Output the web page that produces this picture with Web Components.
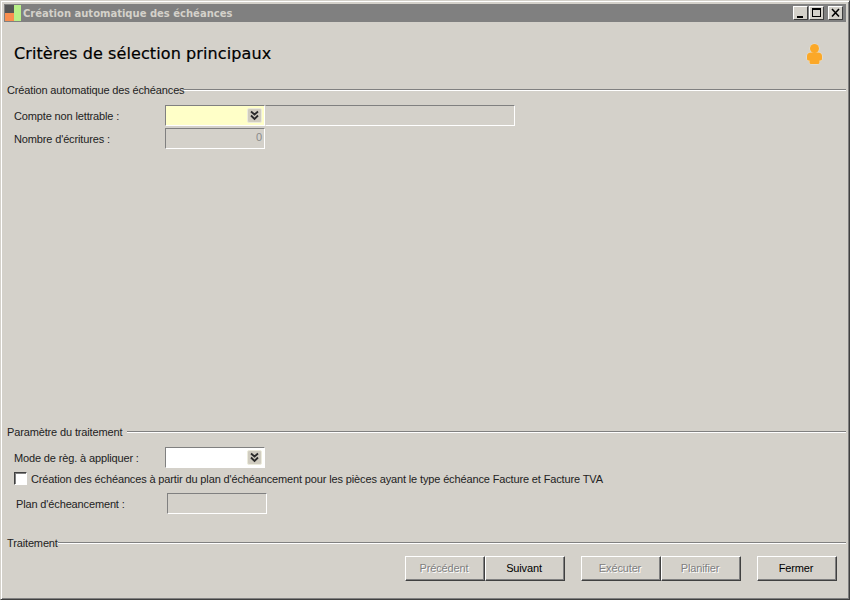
<!DOCTYPE html>
<html lang="fr">
<head>
<meta charset="utf-8">
<title>Création automatique des échéances</title>
<style>
    html, body { margin:0; height:100%; background:#d4d1ca; }
    body { font:11px "Liberation Sans", Arial, sans-serif; letter-spacing:-0.14px; color:#222; }
</style>
</head>
<body>

<app-window>
    <title-bar slot="title">Création automatique des échéances</title-bar>

    <page-header>Critères de sélection principaux</page-header>

    <form-section class="grow" heading="Création automatique des échéances">
        <form-row label="Compte non lettrable :">
            <combo-field required></combo-field>
            <text-field width="250" joined></text-field>
        </form-row>
        <form-row label="Nombre d'écritures :" style="margin-top:2px">
            <text-field width="100" value="0"></text-field>
        </form-row>
    </form-section>

    <form-section heading="Paramètre du traitement" gap="5">
        <form-row label="Mode de règ. à appliquer :">
            <combo-field></combo-field>
        </form-row>
        <check-row>Création des échéances à partir du plan d'échéancement pour les pièces ayant le type échéance Facture et Facture TVA</check-row>
        <form-row label="Plan d'écheancement :" style="margin:8px 0 22px 2px">
            <text-field width="100"></text-field>
        </form-row>
    </form-section>

    <form-section heading="Traitement" compact>
        <button-bar>
            <div class="group">
                <push-button disabled>Précédent</push-button>
                <push-button>Suivant</push-button>
            </div>
            <div class="group">
                <push-button disabled>Exécuter</push-button>
                <push-button disabled>Planifier</push-button>
            </div>
            <div class="group">
                <push-button>Fermer</push-button>
            </div>
        </button-bar>
    </form-section>
</app-window>

<script>
// petit helper, chaque composant a son propre shadow root
function shadow(el, html) {
    el.attachShadow({ mode: "open" }).innerHTML = html;
}

class AppWindow extends HTMLElement {
    constructor() {
        super();
        shadow(this, `
        <style>
            :host {
                display:flex;
                flex-direction:column;
                box-sizing:border-box;
                width:850px;
                height:600px;
                background:#d4d1ca;
                border:1px solid;
                border-color:#d4d1ca #404040 #404040 #d4d1ca;
                box-shadow:inset 1px 1px 0 #fff, inset -1px -1px 0 #808080;
                padding:3px;
            }
            .body {
                flex:1;
                display:flex;
                flex-direction:column;
                min-height:0;
                padding-bottom:15px;
            }
            ::slotted(.grow) { flex:1; }
        </style>
        <slot name="title"></slot>
        <div class="body"><slot></slot></div>
        `);
    }
}
customElements.define("app-window", AppWindow);

class TitleBar extends HTMLElement {
    constructor() {
        super();
        shadow(this, `
        <style>
            :host {
                display:flex;
                align-items:center;
                height:18px;
                background:#808080;
                color:#d4d1ca;
                letter-spacing:0;
                font:bold 10px "DejaVu Sans", Verdana, sans-serif;
            }
            .logo { width:18px; height:18px; flex:none; display:block; margin-right:1px; }
            .text { flex:1; white-space:nowrap; }
            .btns { display:flex; margin-right:3px; }
            .btn {
                box-sizing:border-box;
                width:15px; height:14px;
                background:#d4d1ca;
                border:1px solid;
                border-color:#fff #404040 #404040 #fff;
                display:block;
            }
            .btn.max { margin:0 4px 0 1px; }
        </style>
        <svg class="logo" viewBox="0 0 18 18">
            <rect x="1" y="1" width="9" height="8" fill="#555"/>
            <rect x="1" y="9" width="9" height="8" fill="#f98e4f"/>
            <rect x="10" y="1" width="7" height="16" fill="#b8f088"/>
        </svg>
        <span class="text"><slot></slot></span>
        <div class="btns">
            <svg class="btn" viewBox="0 0 13 12"><rect x="3" y="9" width="6" height="2" fill="#000"/></svg>
            <svg class="btn max" viewBox="0 0 13 12"><rect x="2.500" y="1.500" width="8" height="8" fill="none" stroke="#000"/><rect x="2" y="1" width="9" height="2" fill="#000"/></svg>
            <svg class="btn" viewBox="0 0 13 12"><path d="M3 2l7 7.500M10 2l-7 7.500" stroke="#000" stroke-width="1.600" fill="none"/></svg>
        </div>
        `);
    }
}
customElements.define("title-bar", TitleBar);

class PageHeader extends HTMLElement {
    constructor() {
        super();
        shadow(this, `
        <style>
            :host {
                display:flex;
                align-items:center;
                justify-content:space-between;
                box-sizing:border-box;
                height:61px;
                padding:2px 23px 0 10px;
                color:#000;
                letter-spacing:.1px;
                font:16px "DejaVu Sans", Verdana, sans-serif;
                -webkit-text-stroke:.2px #000;
            }
            svg { width:17px; height:22px; display:block; }
        </style>
        <span><slot></slot></span>
        <svg viewBox="0 0 17 22">
            <g fill="#f2e6cc" stroke="#f2e6cc" stroke-width="1">
                <circle cx="8.500" cy="5.500" r="4.500"/>
                <path d="M5 9.500h7c2.500 0 4 1.500 4 3.500v3c0 1-1 1.500-2.500 1.500v2c0 1-1 1.500-2 1.500h-6c-1 0-2-.5-2-1.500v-2c-1.500 0-2.500-.5-2.500-1.500v-3c0-2 1.500-3.500 4-3.500z"/>
            </g>
            <g fill="#fba828">
                <circle cx="8.500" cy="5.500" r="4.500"/>
                <path d="M5 9.500h7c2.500 0 4 1.500 4 3.500v3c0 1-1 1.500-2.500 1.500v2c0 1-1 1.500-2 1.500h-6c-1 0-2-.5-2-1.500v-2c-1.500 0-2.500-.5-2.500-1.500v-3c0-2 1.500-3.500 4-3.500z"/>
            </g>
        </svg>
        `);
    }
}
customElements.define("page-header", PageHeader);

class FormSection extends HTMLElement {
    constructor() {
        super();
        const heading = this.getAttribute("heading");
        const gapAfter = this.getAttribute("gap") || 0;
        shadow(this, `
        <style>
            :host { display:block; }
            .head {
                display:flex;
                align-items:center;
                height:14px;
                padding-left:3px;
            }
            .head span { white-space:nowrap; margin-right:${gapAfter}px; }
            .head i {
                flex:1;
                height:0;
                margin-top:-1px;
                border-top:1px solid #808080;
                border-bottom:1px solid #fff;
            }
            .content { padding:8px 0 0 10px; }
            :host([compact]) .content { padding-top:6px; }
        </style>
        <div class="head"><span>${heading}</span><i></i></div>
        <div class="content"><slot></slot></div>
        `);
    }
}
customElements.define("form-section", FormSection);

class FormRow extends HTMLElement {
    constructor() {
        super();
        shadow(this, `
        <style>
            :host { display:flex; align-items:center; height:21px; }
            label { width:151px; flex:none; white-space:nowrap; }
            .fields { display:flex; }
        </style>
        <label>${this.getAttribute("label")}</label>
        <div class="fields"><slot></slot></div>
        `);
    }
}
customElements.define("form-row", FormRow);

class TextField extends HTMLElement {
    constructor() {
        super();
        const w = this.getAttribute("width") || 100;
        const value = this.getAttribute("value") || "";
        shadow(this, `
        <style>
            :host {
                display:block;
                box-sizing:border-box;
                width:${w}px;
                height:21px;
                line-height:17px;
                text-align:right;
                padding-right:2px;
                color:#8a8a8a;
                background:#d4d1ca;
                border:1px solid;
                border-color:#808080 #fff #fff #808080;
            }
            :host([joined]) { border-left-color:#d4d1ca; }
        </style>
        ${value}
        `);
    }
}
customElements.define("text-field", TextField);

class ComboField extends HTMLElement {
    constructor() {
        super();
        const bg = this.hasAttribute("required") ? "#ffffc8" : "#fff";
        shadow(this, `
        <style>
            :host {
                display:flex;
                align-items:center;
                justify-content:flex-end;
                box-sizing:border-box;
                width:100px;
                height:21px;
                padding-right:2px;
                background:${bg};
                border:1px solid;
                border-color:#808080 #fff #fff #808080;
            }
            svg { width:15px; height:15px; display:block; }
        </style>
        <svg viewBox="0 0 15 15">
            <rect x="0.500" y="0.500" width="14" height="14" rx="1.500" fill="#d0ccc0" stroke="#ecebdc"/>
            <path d="M4 3.500l3.500 3 3.500-3M4 7.500l3.500 3.500 3.500-3.500" fill="none" stroke="#2a2a2a" stroke-width="1.800"/>
        </svg>
        `);
    }
}
customElements.define("combo-field", ComboField);

class CheckRow extends HTMLElement {
    constructor() {
        super();
        shadow(this, `
        <style>
            :host { display:flex; align-items:center; gap:4px; height:13px; margin:4px 0 0 0; white-space:nowrap; }
            i {
                box-sizing:border-box;
                width:13px; height:13px;
                background:#fff;
                border:1px solid;
                border-color:#404040 #fff #fff #404040;
                box-shadow:inset 1px 1px 0 #808080;
                flex:none;
            }
        </style>
        <i></i><span><slot></slot></span>
        `);
    }
}
customElements.define("check-row", CheckRow);

class ButtonBar extends HTMLElement {
    constructor() {
        super();
        shadow(this, `
        <style>
            :host { display:flex; justify-content:flex-end; gap:16px; padding-right:9px; }
            ::slotted(.group) { display:flex; }
        </style>
        <slot></slot>
        `);
    }
}
customElements.define("button-bar", ButtonBar);

class PushButton extends HTMLElement {
    constructor() {
        super();
        shadow(this, `
        <style>
            :host {
                display:flex;
                align-items:center;
                justify-content:center;
                box-sizing:border-box;
                width:80px;
                height:25px;
                padding:0 2px 1px 0;
                color:#000;
                background:#d4d1ca;
                border:1px solid;
                border-color:#fff #404040 #404040 #fff;
                box-shadow:inset -1px -1px 0 #808080;
            }
            :host([disabled]) { color:#808080; text-shadow:1px 1px 0 #fff; }
        </style>
        <slot></slot>
        `);
    }
}
customElements.define("push-button", PushButton);
</script>
</body>
</html>
